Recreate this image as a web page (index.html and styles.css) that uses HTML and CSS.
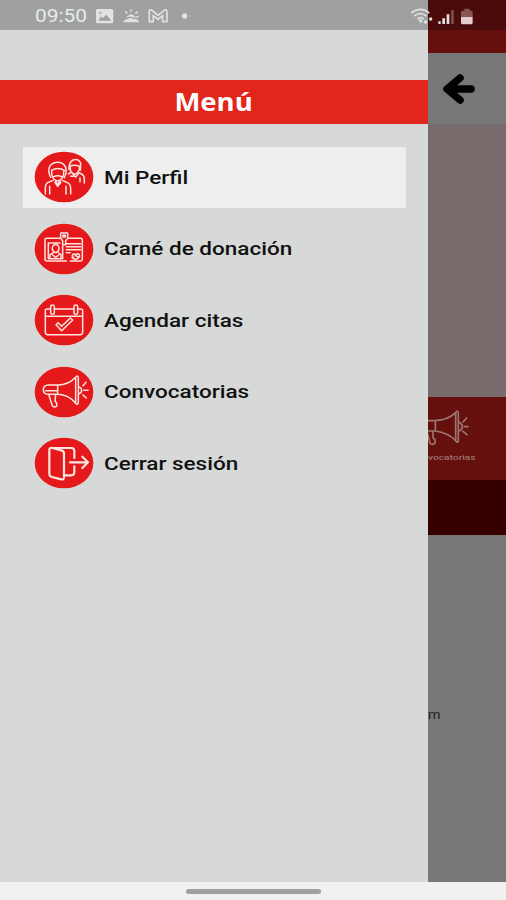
FILE: index.html
```html
<!DOCTYPE html>
<html lang="es">
<head>
<meta charset="utf-8">
<title>Menú</title>
<link rel="stylesheet" href="styles.css">
</head>
<body>
<div class="screen">
  <div class="views">
    <aside class="drawer">
      <h1 class="title"><span>Menú</span></h1>
      <nav class="menu">
        <a class="item active">
          <svg class="icon" viewBox="41 33 180 156"><ellipse cx="131" cy="111" rx="88" ry="76"/>
            <g><path d="M91 112C83 98 84 82 91 75C101 64 121 64 130 73C141 83 139 100 132 113M94 91Q113 80 134 92M94 91V103Q98 120 112 123Q127 119 130 103V92M100 110Q112 104 124 110M105 124L112 133L120 124M98 121L82 128Q75 132 75 145V162M126 121L141 128Q151 132 151 145V162M88 139V162M137 139V162M104 128L112 139L121 128"/><path d="M146 88C145 73 149 65 158 60Q175 55 181 70L180 91M150 77Q165 73 178 79M150 80V91Q156 102 164 103Q174 99 177 88V79M151 98L144 102M175 98Q192 103 192 116V129M158 103L166 111L174 102M179 114V125M151 109H161"/></g></svg>
          <span>Mi Perfil</span></a>
        <a class="item">
          <svg class="icon" viewBox="41 23 180 156"><ellipse cx="131" cy="101" rx="88" ry="76"/>
            <g><path d="M119 69H78Q74 69 74 74V132Q74 137 80 137H138M143 69H181Q186 69 186 74V132Q186 137 181 137H150"/><path d="M121 53H142V69L136 76V88H127V76L121 69ZM128 60H135V65H128Z"/><path d="M119 83H84V130H127V92"/><path d="M96 101C94 83 118 83 116 101C113 115 99 115 96 101M98 113L89 118V128M115 113L122 118V128M97 119L106 126L115 119M138 85H181M138 94H181M138 103H181M138 112H149M159 126C151 119 161 111 166 119C176 109 183 123 171 130Q163 134 155 127M165 121L172 124"/></g></svg>
          <span>Carné de donación</span></a>
        <a class="item">
          <svg class="icon" viewBox="41 27 180 156"><ellipse cx="131" cy="105" rx="88" ry="76"/>
            <g><path d="M90 72H80Q75 72 75 78V142Q75 149 82 149H179Q187 149 187 142V78Q187 72 181 72H173M103 72H160M77 94H185"/><rect x="91" y="60" width="11" height="28" rx="5"/><rect x="161" y="60" width="11" height="28" rx="5"/><path d="M107 119L113 113L124 124L150 99L157 105L124 137Z"/></g></svg>
          <span>Agendar citas</span></a>
        <a class="item">
          <svg class="icon" viewBox="41 26 180 156"><ellipse cx="131" cy="104" rx="88" ry="76"/>
            <g><path d="M112 83H84Q69 84 69 97Q69 111 86 111H112ZM112 83Q145 83 166 60V138Q145 112 112 111M166 60Q174 51 174 63V134Q174 145 166 138M85 111L96 145Q100 151 109 147V137L104 132L106 112M76 100H110M175 88Q184 91 184 99Q184 107 175 110M188 85L197 75M190 99H203M188 113L198 122"/></g></svg>
          <span>Convocatorias</span></a>
        <a class="item">
          <svg class="icon" viewBox="41 21 180 156"><ellipse cx="131" cy="99" rx="88" ry="76"/>
            <g class="bold"><path d="M94 54H153Q162 54 162 64V84M162 109V127Q162 136 153 136H133M87 60Q87 52 96 54L123 61Q131 63 131 70V142Q131 150 123 148L95 141Q87 139 87 131ZM149 97H202M186 80L203 97L186 114"/></g></svg>
          <span>Cerrar sesión</span></a>
      </nav>
    </aside>
    <main class="page">
      <div class="page-top"></div>
      <div class="page-bar"><svg class="back" viewBox="0 0 34 32"><path d="M29 16H7M18 5L5 16L18 27"/></svg></div>
      <div class="hero"></div>
      <div class="tab">
        <svg class="horn" viewBox="85 84 126 116"><path d="M80 122H107V153H80M107 122Q145 120 168 98V182Q145 158 107 153M168 98Q176 87 176 102V178Q176 193 168 182M83 157L91 190Q100 196 106 189V178L100 174V154M178 127Q188 131 188 140Q188 149 178 153M190 126L201 114M194 140H205M190 154L202 164"/></svg>
        <span>vocatorias</span>
      </div>
      <div class="band"></div>
      <div class="body-text"><span>m</span></div>
    </main>
  </div>
  <div class="navbar"><i></i></div>
  <header class="status">
    <span class="clock">09:50</span>
    <svg class="notices" viewBox="288 20 280 54">
      <path fill-rule="evenodd" d="M293 26H335Q340 26 340 31V64Q340 69 335 69H293Q288 69 288 64V31Q288 26 293 26ZM295 61H334L319 43L309 53L303 48ZM298 34V40H304V34Z"/>
      <path d="M370 66Q371 58 382 57Q389 48 398 55Q414 54 418 66ZM379 53Q393 31 409 53Q401 50 399 51Q389 45 379 53ZM391 27H395V35H391ZM374 34L378 31L384 39L381 41ZM411 32L415 35L407 42L404 39ZM408 48L416 46V50L410 53Z"/>
      <path class="line" d="M448 64V32Q449 27 455 29L474 45L494 29Q500 27 501 32V64H488V46L474 57L460 46V64Z"/>
      <circle cx="554" cy="47" r="8"/>
    </svg>
    <svg class="signals" viewBox="60 18 192 56">
      <path class="line" d="M64 36Q91 14 118 36M73 45Q91 30 109 45M82 54Q91 46 101 54"/>
      <path d="M86 57L91 54L99 60L91 66Z"/>
      <circle cx="107" cy="63" r="5"/>
      <circle cx="122" cy="54" r="5"/>
      <path d="M145 61H152V69H145ZM157 52H165V69H157ZM170 40H178V69H170Z"/>
      <path class="dim" d="M184 27H191V69H184ZM223 23H239V29H245Q248 29 248 34V48H213V34Q213 29 218 29H223Z"/>
      <path class="charge" d="M213 48H248V65Q248 70 243 70H218Q213 70 213 65Z"/>
    </svg>
  </header>
</div>
</body>
</html>
```
FILE: styles.css
```css
* { box-sizing: border-box; }
body { margin: 0; font-family: Roboto, "Liberation Sans", sans-serif; }
.screen {
  position: relative;
  width: 506px;
  height: 900px;
  overflow: hidden;
  display: flex;
  flex-direction: column;
  background: #f1f1f1;
}
.views { display: grid; grid-template-columns: 428px 78px; height: 882px; }
.drawer { background: #d7d9d8; padding-top: 80px; }
.title {
  margin: 0;
  height: 44px;
  background: #e2261b;
  color: #fff;
  text-align: center;
  font: 700 25px/42px "Open Sans", sans-serif;
}
.title span { display: inline-block; transform: scaleX(1.1); }
.menu { padding: 22.5px 22px 0 23px; display: flex; flex-direction: column; gap: 10px; }
.item {
  display: flex;
  align-items: center;
  height: 61.5px;
  padding-left: 11px;
  gap: 9.5px;
  color: #111;
  font-size: 19px;
  font-weight: 500;
}
.item.active { background: #eee; }
.item span { white-space: nowrap; transform: scaleX(1.185); transform-origin: left; }
.icon { width: 60px; height: 52px; flex: none; }
.icon ellipse { fill: #e5191b; }
.icon g { fill: none; stroke: #ffe5df; stroke-width: 4.5; stroke-linecap: round; stroke-linejoin: round; }
.icon .bold { stroke-width: 6.5; }

.page { background: #777; overflow: hidden; display: flex; flex-direction: column; }
.page-top { height: 53px; background: #66100e; }
.page-bar { height: 71px; padding: 20px 0 0 14px; background: #777; }
.back { display: block; width: 34px; height: 32px; }
.back path { fill: none; stroke: #000; stroke-width: 7.5; stroke-linecap: round; stroke-linejoin: round; }
.hero { height: 273px; background: #776b6c; }
.tab { height: 83px; background: #66100e; padding-top: 11px; color: #99706b; }
.horn { display: block; width: 42px; height: 38.7px; }
.horn path { fill: none; stroke: #9c7771; stroke-width: 5; stroke-linecap: round; stroke-linejoin: round; }
.tab span {
  display: block;
  font: 500 7.5px/10px Roboto, sans-serif;
  margin-top: 6px;
  transform: scaleX(1.36);
  transform-origin: left;
}
.band { height: 55px; background: #370000; }
.body-text { padding-top: 171px; font-size: 13px; line-height: 18px; color: #242424; }
.body-text span { display: inline-block; transform: scaleX(1.1); transform-origin: left; }

.navbar { flex: 1; display: flex; padding: 7px 0 0 186px; }
.navbar i { width: 135px; height: 5px; border-radius: 3px; background: #a0a0a0; }

.status {
  position: absolute;
  inset: 0 0 auto;
  height: 30px;
  background: rgba(0, 0, 0, .26);
  display: flex;
  align-items: center;
  padding: 2px 32px 0 35px;
  color: #e9ebea;
}
.clock { width: 61px; font-size: 18.5px; transform: scaleX(1.13); transform-origin: left; white-space: nowrap; }
.status svg { fill: #e0e2e1; }
.status .line { fill: none; stroke: #e0e2e1; stroke-width: 5; }
.notices { width: 93.3px; height: 18px; }
.signals { width: 64px; height: 18.7px; margin-left: auto; }
.signals .dim { fill: #8b5555; }
.signals .charge { fill: #e3cccd; }
```
